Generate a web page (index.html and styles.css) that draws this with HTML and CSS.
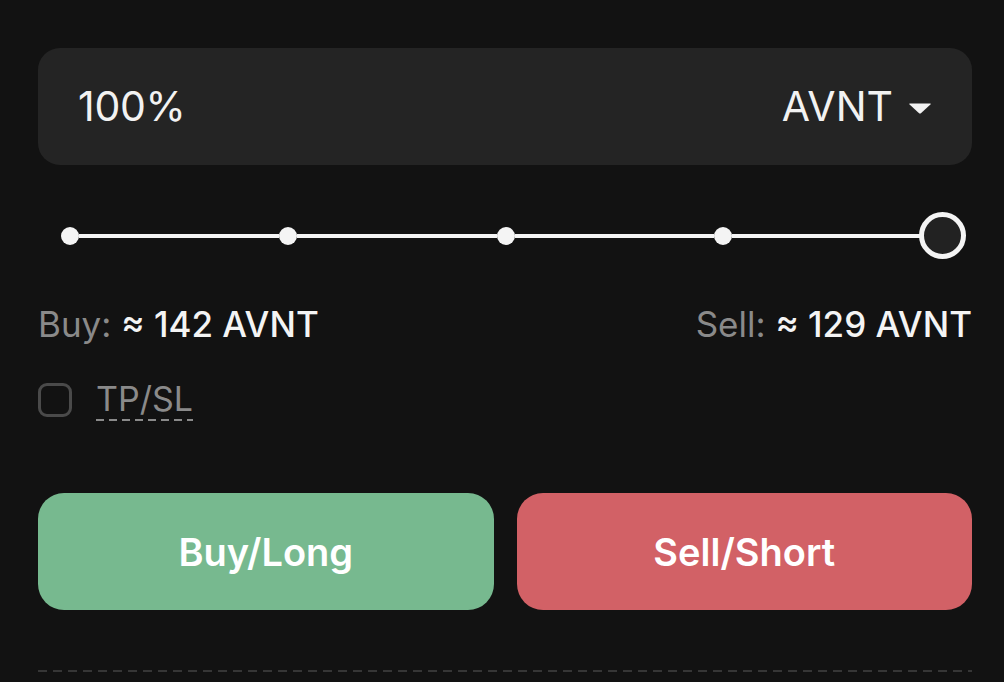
FILE: index.html
```html
<!DOCTYPE html>
<html>
<head>
<meta charset="utf-8">
<link rel="stylesheet" href="styles.css">
</head>
<body>
<div class="panel">
  <div class="amount">
    <span class="amount-value">100%</span>
    <span class="asset">AVNT
      <svg class="caret" width="24" height="12" viewBox="0 0 24 12"><path d="M2 1.5 H22 Q23.5 1.5 22.4 2.6 L13.2 11 Q12 12 10.8 11 L1.6 2.6 Q0.5 1.5 2 1.5 Z" fill="#f2f2f2"/></svg>
    </span>
  </div>

  <div class="slider">
    <span class="mark"></span>
    <span class="seg"></span>
    <span class="mark"></span>
    <span class="seg"></span>
    <span class="mark"></span>
    <span class="seg"></span>
    <span class="mark"></span>
    <span class="seg"></span>
    <span class="handle"></span>
  </div>

  <div class="summary">
    <div class="est"><span class="lbl">Buy:</span> <span class="val">≈ 142 AVNT</span></div>
    <div class="est"><span class="lbl">Sell:</span> <span class="val">≈ 129 AVNT</span></div>
  </div>

  <div class="tpsl">
    <span class="checkbox"></span>
    <span class="tpsl-label">TP/SL</span>
  </div>

  <div class="actions">
    <button class="btn buy">Buy/Long</button>
    <button class="btn sell">Sell/Short</button>
  </div>

  <div class="divider"></div>
</div>
</body>
</html>
```

FILE: styles.css
```css
html, body {
  margin: 0;
  padding: 0;
  background: #121212;
}
body {
  font-family: Inter, "Noto Sans", "Liberation Sans", sans-serif;
  color: #f2f2f2;
  width: 1004px;
  height: 682px;
  overflow: hidden;
}
.panel {
  padding: 48px 32px 0 38px;
  display: flex;
  flex-direction: column;
}
.amount {
  height: 117px;
  box-sizing: border-box;
  background: #242424;
  border-radius: 22px;
  display: flex;
  align-items: center;
  justify-content: space-between;
  padding: 0 40px 0 40px;
  font-size: 41px;
  line-height: 1;
}
.amount-value {
  letter-spacing: -0.3px;
}
.asset {
  display: flex;
  align-items: center;
  gap: 15px;
}
.caret {
  display: block;
  margin-top: 2px;
}
.slider {
  margin-top: 47px;
  height: 47px;
  display: flex;
  align-items: center;
  padding: 0 22px 0 23px;
}
.mark {
  width: 18px;
  height: 18px;
  border-radius: 50%;
  background: #f4f4f4;
  flex: none;
}
.seg {
  flex: 1;
  height: 4px;
  background: #f4f4f4;
}
.handle {
  flex: none;
  width: 47px;
  height: 47px;
  box-sizing: border-box;
  border: 5px solid #f4f4f4;
  border-radius: 50%;
  background: #222222;
  margin: 0 -16px 0 -13px;
}
.summary {
  margin-top: 45px;
  display: flex;
  justify-content: space-between;
  font-size: 35px;
  line-height: 40px;
}
.lbl {
  color: #8a8a8a;
}
.val {
  color: #f4f4f4;
  font-weight: 500;
}
.tpsl {
  margin-top: 36px;
  height: 40px;
  display: flex;
  align-items: center;
  gap: 24px;
}
.checkbox {
  width: 34px;
  height: 34px;
  box-sizing: border-box;
  border: 3px solid #4a4a4a;
  border-radius: 9px;
  flex: none;
}
.tpsl-label {
  font-size: 34px;
  line-height: 40px;
  color: #8a8a8a;
  padding-bottom: 2px;
  background-image: repeating-linear-gradient(90deg, #8a8a8a 0 8px, transparent 8px 13px);
  background-size: 100% 2px;
  background-repeat: no-repeat;
  background-position: 0 100%;
}
.actions {
  margin-top: 73px;
  display: grid;
  grid-template-columns: 1fr 1fr;
  gap: 23px;
}
.btn {
  height: 117px;
  border: 0;
  border-radius: 26px;
  font-family: Inter, "Noto Sans", "Liberation Sans", sans-serif;
  font-size: 38px;
  font-weight: 600;
  color: #ffffff;
  padding: 0;
}
.buy {
  background: #77b98f;
}
.sell {
  background: #d26166;
}
.divider {
  margin-top: 60px;
  height: 2px;
  background-image: repeating-linear-gradient(90deg, #363636 0 9px, transparent 9px 15px);
}
```
